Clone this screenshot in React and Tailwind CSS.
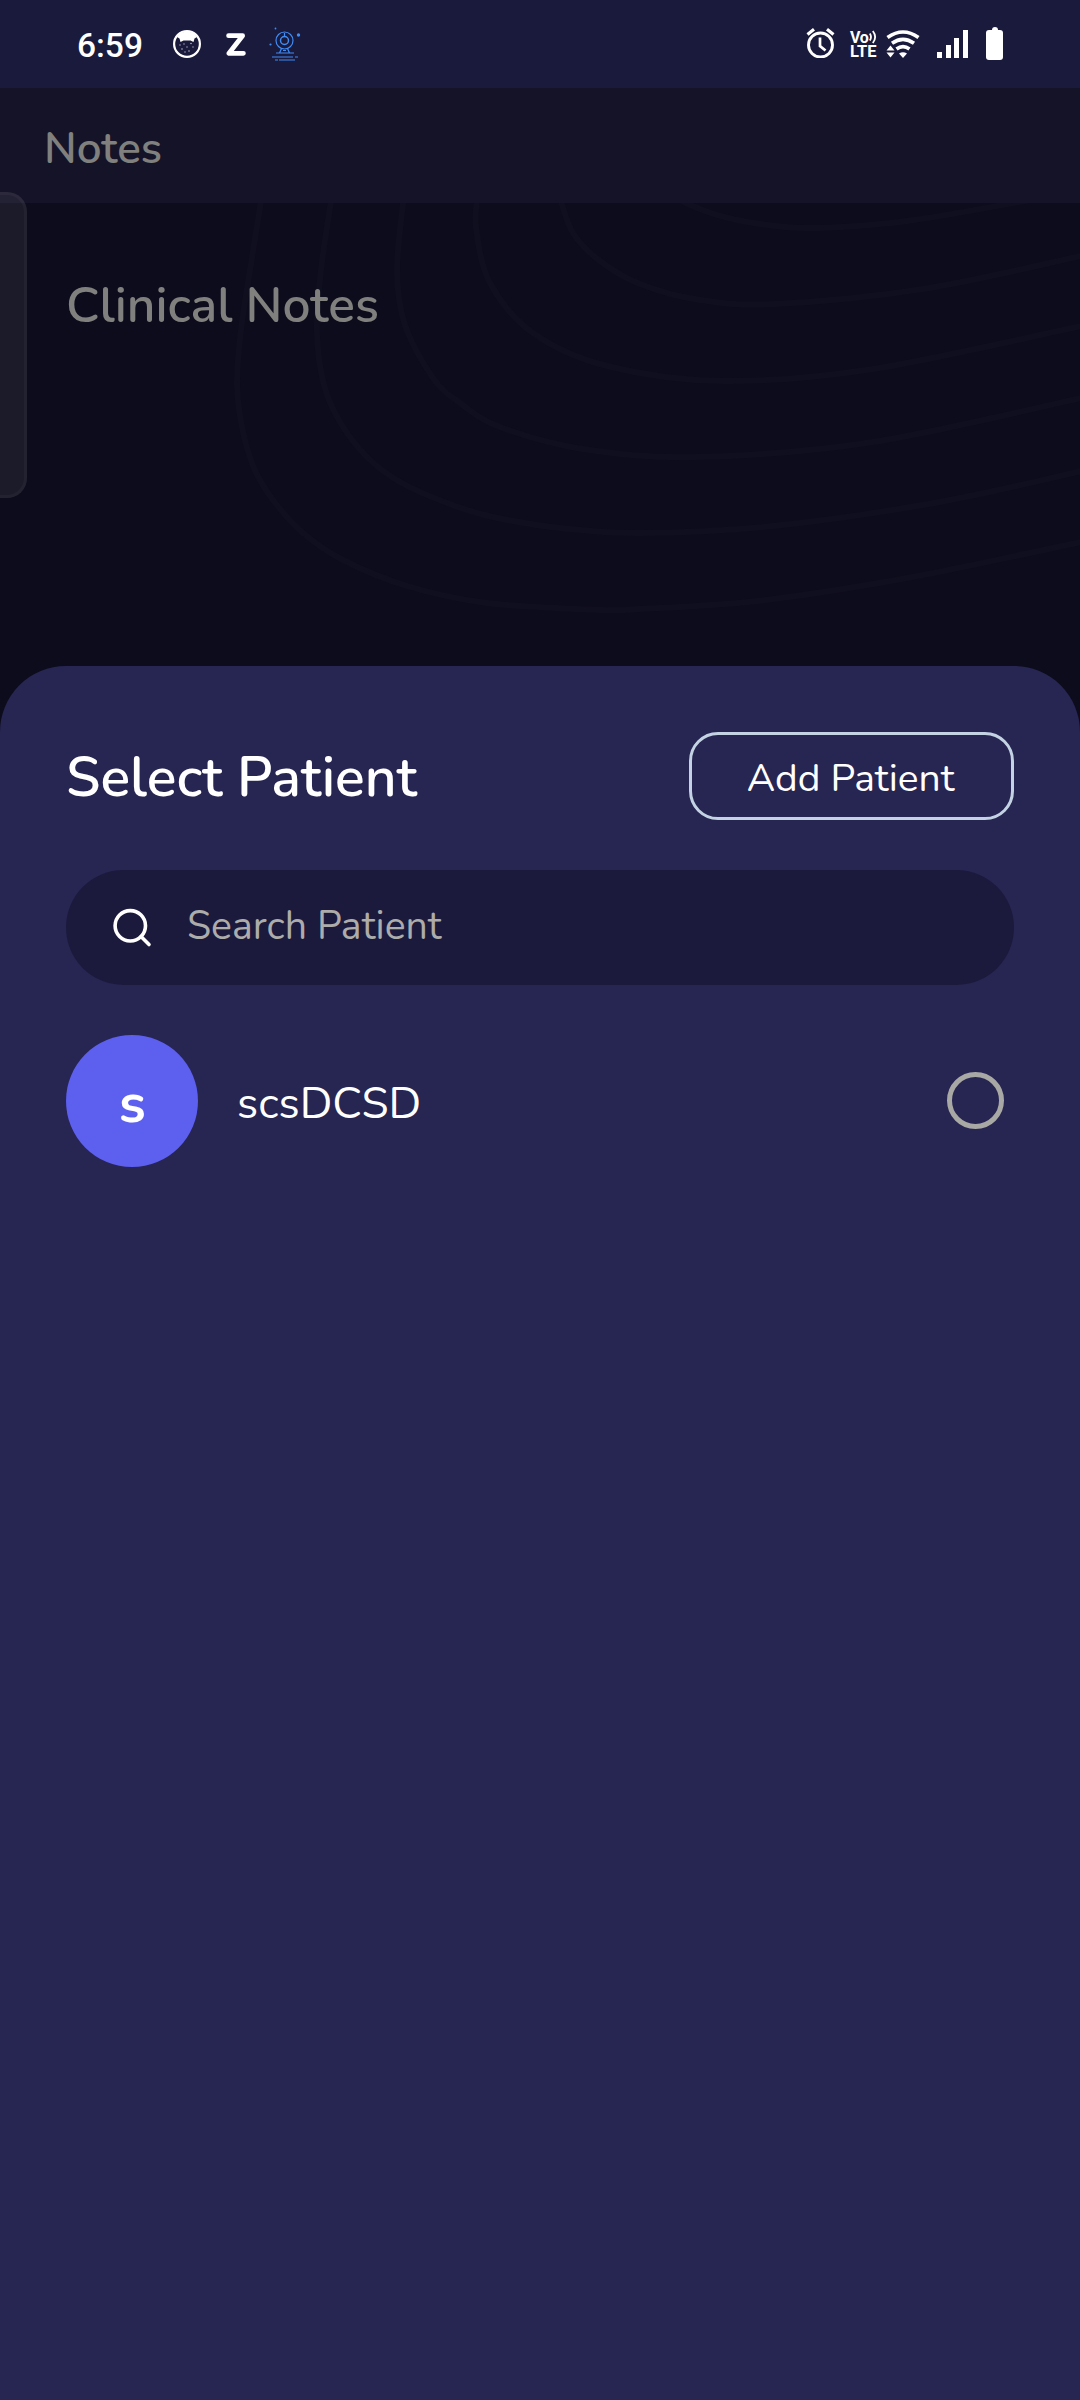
const contours = [
  [[262, 195], [250, 270], [241, 330], [237, 383], [242, 427], [254, 468], [273, 500], [303, 533], [343, 560], [407, 586], [487, 603], [600, 610], [640, 609], [757, 601], [907, 578], [1086, 541]],
  [[332, 195], [321, 270], [317, 333], [324, 385], [340, 422], [367, 457], [400, 482], [447, 503], [493, 517], [560, 528], [640, 533], [773, 526], [940, 502], [1086, 470]],
  [[404, 195], [397, 270], [405, 325], [433, 378], [460, 403], [500, 427], [583, 449], [697, 457], [873, 442], [1086, 397]],
  [[478, 195], [476, 227], [490, 283], [533, 333], [607, 366], [723, 381], [873, 369], [1086, 325]],
  [[559, 195], [573, 233], [600, 261], [640, 284], [700, 300], [775, 304], [923, 289], [1086, 255]],
  [[670, 195], [700, 209], [737, 220], [805, 228], [907, 221], [1030, 200]],
];

function smooth(points) {
  let d = `M${points[0][0]} ${points[0][1]}`;
  for (let i = 0; i < points.length - 1; i++) {
    const a = points[Math.max(i - 1, 0)];
    const b = points[i];
    const c = points[i + 1];
    const e = points[Math.min(i + 2, points.length - 1)];
    d += `C${b[0] + (c[0] - a[0]) / 6} ${b[1] + (c[1] - a[1]) / 6} ${c[0] - (e[0] - b[0]) / 6} ${c[1] - (e[1] - b[1]) / 6} ${c[0]} ${c[1]}`;
  }
  return d;
}

function Contours() {
  return (
    <svg className="absolute left-0 top-0 h-[463px] w-[1080px]" viewBox="0 203 1080 463" fill="none" stroke="#100f1f" strokeWidth="6" aria-hidden="true">
      {contours.map((points, i) => (
        <path key={i} d={smooth(points)} />
      ))}
    </svg>
  );
}

function CatIcon() {
  return (
    <svg className="h-7 w-7" viewBox="0 0 28 28" aria-hidden="true">
      <circle cx="14" cy="14" r="12.900" fill="none" stroke="#fff" strokeWidth="2.200" />
      <path d="M4 7C8 0 20 0 24 7L21.500 8.500L20.500 12L17.500 10.500H10.500L7.500 12L6.500 8.500Z" fill="#fff" />
      <g fill="#b5b5c8">
        <circle cx="7" cy="15" r=".7" /><circle cx="11" cy="14" r=".7" /><circle cx="18" cy="13.500" r=".8" />
        <circle cx="14" cy="17" r=".7" /><circle cx="9" cy="19" r=".8" /><circle cx="20" cy="17" r=".7" />
        <circle cx="12" cy="22" r=".7" /><circle cx="16" cy="21" r=".8" />
      </g>
    </svg>
  );
}

function ZIcon() {
  return (
    <svg className="h-[23px] w-5" viewBox="0 0 20 23" fill="none" stroke="#fff" strokeWidth="4.800" aria-hidden="true">
      <path d="M2.600 2.700H16.600L3 20.300H17.400" strokeLinejoin="round" strokeLinecap="round" />
    </svg>
  );
}

function CameraIcon() {
  return (
    <svg className="h-[34px] w-8" viewBox="0 0 32 34" fill="none" stroke="#3f8cf5" strokeWidth="1.200" aria-hidden="true">
      <circle cx="15.500" cy="13.500" r="8.500" />
      <circle cx="15.500" cy="13.500" r="4" strokeWidth="1.500" />
      <path d="M15.500 6v3M12.500 21.500l-2 4.500M18.500 21.500l2 4.500M14 23.500h3M7 26h18M3 30h21M26 30h3M6 33h3M10 33h16" />
      <circle cx="29.500" cy="8" r="1.700" fill="#3f8cf5" stroke="none" />
      <circle cx="1.500" cy="17.500" r="1.100" fill="#3f8cf5" stroke="none" />
      <circle cx="6.500" cy="1.500" r=".9" fill="#3f8cf5" stroke="none" />
    </svg>
  );
}

function AlarmIcon() {
  return (
    <svg className="h-[30px] w-[29px]" viewBox="0 0 29 30" fill="none" stroke="#fff" aria-hidden="true">
      <circle cx="14.500" cy="17" r="12" strokeWidth="2.900" />
      <path d="M1.500 6.500L8 1.300M27.500 6.500L21 1.300" strokeWidth="3.200" />
      <path d="M14 9.500v8.500l5.500 4.500" strokeWidth="2.700" />
    </svg>
  );
}

function VolteIcon() {
  return (
    <div className="flex h-[28px] w-[27px] flex-col font-['Roboto',sans-serif] font-bold text-white">
      <div className="flex h-[14px] items-start">
        <span className="text-[16px] leading-[13px] tracking-[-0.300px]">Vo</span>
        <svg className="-mt-px h-[14px] w-[8px] shrink-0" viewBox="0 0 8 14" fill="none" stroke="#fff" strokeWidth="1.800" aria-hidden="true">
          <path d="M.8 3.500Q3.200 7 .8 10.500M3.800 1Q8.500 7 3.800 13" />
        </svg>
      </div>
      <span className="text-[16.500px] leading-[14px]">LTE</span>
    </div>
  );
}

function WifiIcon() {
  return (
    <svg className="h-7 w-[34px]" viewBox="0 0 34 28" fill="none" stroke="#fff" strokeWidth="3.600" aria-hidden="true">
      <path d="M1.500 7.500Q17 -3.500 32.500 7.500M6 13.300Q17 5.500 28 13.300M10.500 19Q17 14.200 23.500 19" />
      <path d="M.5 20.500L4.500 15.500L8.500 20.500ZM.5 22.500L4.500 27.500L8.500 22.500ZM13 23.500L17 28L21 23.500Q17 21 13 23.500Z" fill="#fff" stroke="none" />
    </svg>
  );
}

function SignalIcon() {
  return (
    <div className="flex h-7 w-[31px] items-end justify-between">
      <i className="h-1.5 w-[5px] bg-white" />
      <i className="h-[13px] w-[5px] bg-white" />
      <i className="h-5 w-[5px] bg-white" />
      <i className="h-7 w-[5px] bg-white" />
    </div>
  );
}

function BatteryIcon() {
  return (
    <div className="-mt-px flex h-[33px] w-[17px] flex-col items-center">
      <i className="h-[3px] w-[6px] rounded-t-sm bg-white" />
      <i className="h-[30px] w-[17px] rounded-[3px] bg-white" />
    </div>
  );
}

function StatusBar() {
  return (
    <div className="flex h-[88px] items-center justify-between bg-[#1a1a3d] pl-[77px] pr-[77px] text-white">
      <div className="flex items-center">
        <span className="w-[96px] pt-[4px] font-['Roboto',sans-serif] text-[33.500px] font-medium leading-none">6:59</span>
        <CatIcon />
        <div className="w-[25px]" />
        <ZIcon />
        <div className="w-[23px]" />
        <CameraIcon />
      </div>
      <div className="flex items-center">
        <div className="-mt-[3px]"><AlarmIcon /></div>
        <div className="ml-[15px] mt-0.5"><VolteIcon /></div>
        <div className="ml-[9px]"><WifiIcon /></div>
        <div className="ml-[17px]"><SignalIcon /></div>
        <div className="ml-[18px]"><BatteryIcon /></div>
      </div>
    </div>
  );
}

function PatientRow({ name }) {
  return (
    <div className="mt-[50px] flex h-[132px] items-center">
      <div className="flex h-[132px] w-[132px] items-center justify-center rounded-full bg-[#5d5fef]">
        <span className="pl-px pt-[4px] text-[55px] font-bold leading-none">{name[0]}</span>
      </div>
      <span className="ml-[39px] pt-[5px] text-[44px] leading-none">{name}</span>
      <span className="-mt-px ml-auto mr-[10px] h-[57px] w-[57px] rounded-full border-[5px] border-[#a8a8a4]" />
    </div>
  );
}

export default function App() {
  return (
    <div className="relative flex h-[2400px] w-[1080px] flex-col overflow-hidden bg-[#0d0c1c] font-['Nunito','Lato',sans-serif] text-white">
      <StatusBar />
      <header className="flex h-[115px] items-center bg-[#151327] pl-[43px] text-[#80807e]">
        <h1 className="pl-px pt-[7px] text-[44px] font-semibold leading-none">Notes</h1>
      </header>
      <main className="relative h-[463px]">
        <Contours />
        <h2 className="relative pl-[66px] pt-[79px] text-[49.700px] font-semibold leading-none text-[#80807e]">Clinical Notes</h2>
      </main>
      <div className="absolute left-0 top-[192px] h-[306px] w-[27px] rounded-r-[20px] border-[3px] border-l-0 border-[#ffffff09] bg-[#ffffff10]" />
      <section className="flex-1 rounded-t-[66px] bg-[#272552] px-[66px] pt-[66px]">
        <div className="flex h-[88px] items-center justify-between">
          <h2 className="pt-[6px] text-[55.300px] font-semibold leading-none">Select Patient</h2>
          <button className="flex h-[88px] w-[325px] items-center justify-center rounded-[29px] border-[3px] border-[#c3d3e3] text-[39px] leading-none">
            <span className="pr-0.5 pt-[4px]">Add Patient</span>
          </button>
        </div>
        <div className="mt-[50px] flex h-[115px] items-center rounded-full bg-[#1b1a3d] pl-[46px]">
          <svg className="h-10 w-10" viewBox="0 0 40 40" fill="none" stroke="#fff" strokeWidth="3.600" strokeLinecap="round" aria-hidden="true">
            <circle cx="18.300" cy="17.800" r="15.200" />
            <path d="M29 28.600L37 36.600" />
          </svg>
          <span className="ml-[35px] pb-[2px] text-[39.200px] leading-none text-[#acacaa]">Search Patient</span>
        </div>
        <PatientRow name="scsDCSD" />
      </section>
    </div>
  );
}
